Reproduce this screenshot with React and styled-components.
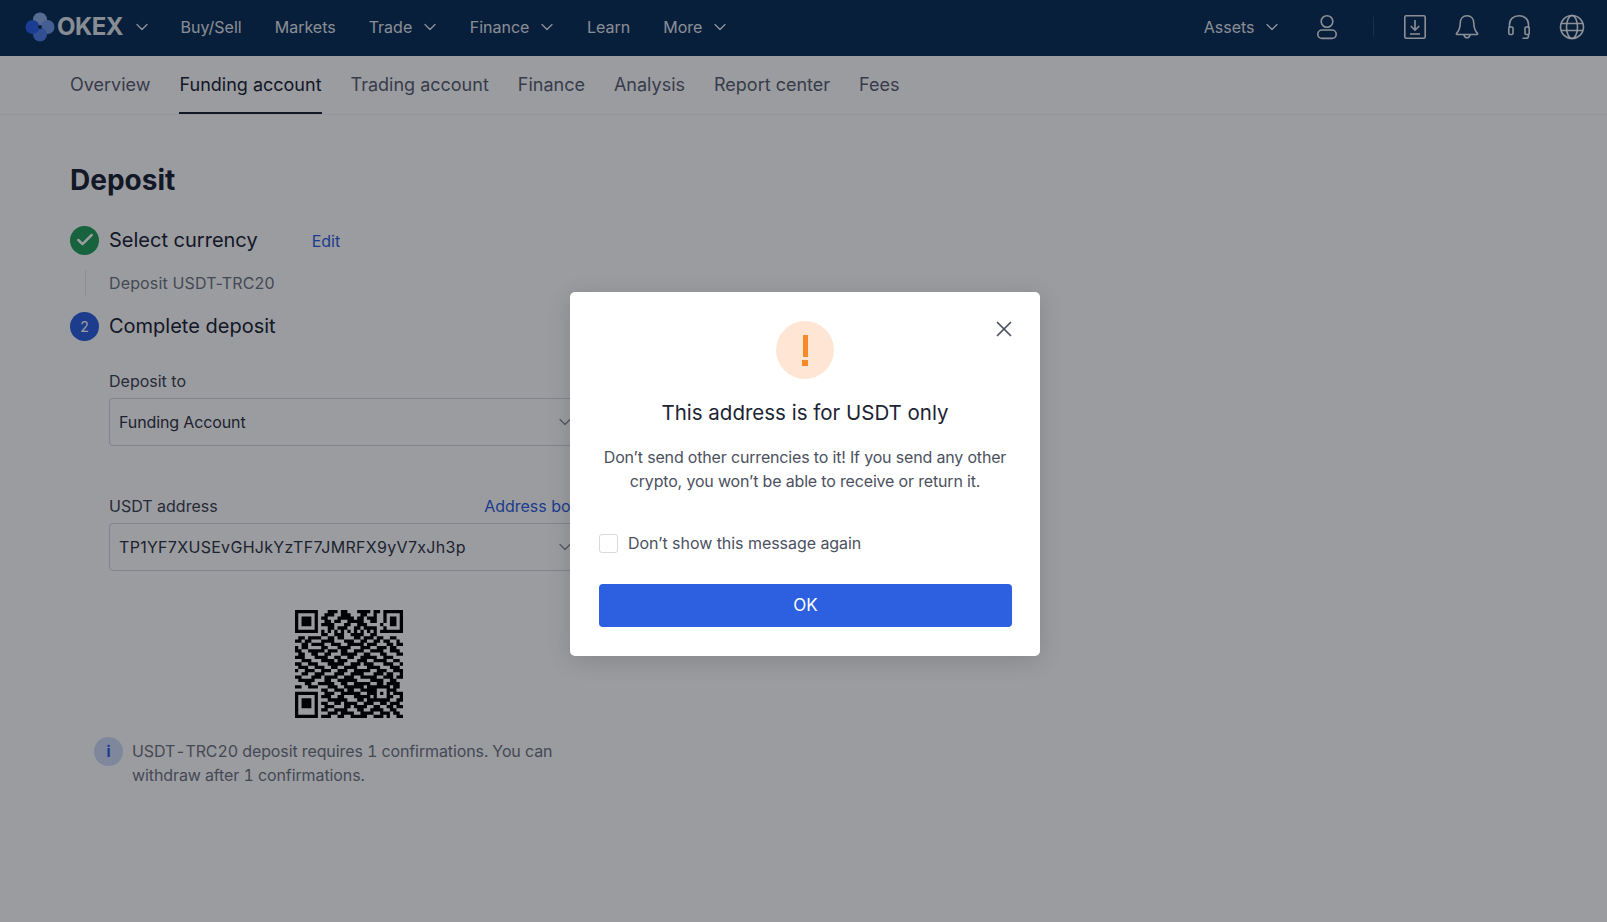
import React from 'react'
import styled, { createGlobalStyle } from 'styled-components'
import { ChevronDown, Check, X } from 'lucide-react'

const GlobalStyle = createGlobalStyle`
  html, body {
    margin: 0;
    padding: 0;
    background: #fff;
    font-family: Inter, "Noto Sans", sans-serif;
    color: #1c2433;
  }
  * { box-sizing: border-box; }
`

const QR_ROWS = [
  '111111100011101100011110110111111',
  '100000100111001110001100100100001',
  '101110101100011111011011100101101',
  '101110100110110011111001100101101',
  '101110101111000110011100001001101',
  '100000100011011100110111100100001',
  '111111101010101010101010101111111',
  '000000001100111001111001100000000',
  '011011110011011000110111011001100',
  '110110001111000111001100110110010',
  '001101111001110011111011100011011',
  '101100001100011110001110011101100',
  '110011111011101100111001111001110',
  '011001100110001111100110001100011',
  '111000111100110011001111100111000',
  '001110001111011100011100111100110',
  '110011100011111001110111000111001',
  '011100111001100111100011110001110',
  '100111001110011100111110011100111',
  '001100111000111001111000111011001',
  '110001110111100111001111100111011',
  '011111000110011111100001111001100',
  '000110011111001100111110011011110',
  '110011100011100111111011111110110',
  '000000001100111011001111100011100',
  '111111100111001111110011101010111',
  '100000101110011000111110100011001',
  '101110100011111100011011111110011',
  '101110101100110111100111001101110',
  '101110100111000110111100110011011',
  '100000101100111100011001111001100',
  '100000100011101111001111001110110',
  '111111101110011001111100111010011',
]

const qrPath = QR_ROWS.map((row, y) =>
  row.split('').map((cell, x) => (cell === '1' ? `M${x} ${y}h1v1h-1z` : '')).join('')
).join('')

const navLinks = [
  { label: 'Buy/Sell' },
  { label: 'Markets' },
  { label: 'Trade', menu: true },
  { label: 'Finance', menu: true },
  { label: 'Learn' },
  { label: 'More', menu: true },
]

const tabs = ['Overview', 'Funding account', 'Trading account', 'Finance', 'Analysis', 'Report center', 'Fees']

function Logo() {
  return (
    <svg width="30" height="30" viewBox="0 0 30 30">
      <circle cx="15" cy="7.5" r="7" fill="#8db0e6" />
      <circle cx="22.5" cy="15" r="7" fill="#6f9ae6" />
      <circle cx="15" cy="22.5" r="7" fill="#4f7fea" />
      <circle cx="7.5" cy="15" r="7" fill="#2c62ec" />
      <circle cx="15" cy="15" r="2" fill="#0a2f59" />
    </svg>
  )
}

function App() {
  return (
    <Page>
      <GlobalStyle />
      <TopBar>
        <Brand>
          <Logo />
          <Wordmark>OKEX</Wordmark>
          <ChevronDown size={20} strokeWidth={1.6} />
        </Brand>
        <NavList>
          {navLinks.map(link => (
            <NavItem key={link.label}>
              {link.label}
              {link.menu && <ChevronDown size={20} strokeWidth={1.6} />}
            </NavItem>
          ))}
        </NavList>
        <RightNav>
          <NavItem>
            Assets
            <ChevronDown size={20} strokeWidth={1.6} />
          </NavItem>
          <UserIcon viewBox="0 0 24 26" fill="none" stroke="currentColor" strokeWidth="1.6">
            <circle cx="12" cy="7.5" r="5.8" />
            <rect x="2.800" y="16" width="18.400" height="8.400" rx="4.200" />
          </UserIcon>
          <Divider />
          <IconGroup>
            <NavIcon viewBox="0 0 24 26" fill="none" stroke="currentColor" strokeWidth="1.6">
              <rect x="1.8" y="1.8" width="20.4" height="22.4" rx="1.5" />
              <path d="M12 6v10M7.8 12l4.2 4.2 4.2-4.2M7 20h10" />
            </NavIcon>
            <NavIcon viewBox="0 0 24 26" fill="none" stroke="currentColor" strokeWidth="1.6">
              <path d="M12 1.8c-4.4 0-6.8 3.4-6.8 7.4 0 5-1.6 8-3.7 10.2-.4.5 0 1.1.5 1.1h20c.6 0 .9-.6.5-1.1-2.100-2.200-3.700-5.200-3.700-10.200 0-4-2.400-7.400-6.800-7.400z" />
              <path d="M9 21c.5 1.800 1.500 2.800 3 2.800s2.500-1 3-2.800" />
            </NavIcon>
            <NavIcon viewBox="0 0 24 26" fill="none" stroke="currentColor" strokeWidth="1.6">
              <path d="M2.500 14v-3.500C2.500 5.200 6.600 1.800 12 1.800s9.500 3.400 9.500 8.700V14" />
              <rect x="1.800" y="13" width="4.200" height="7.500" rx="1.200" />
              <rect x="18" y="13" width="4.200" height="7.500" rx="1.200" />
              <path d="M21.500 20.500v1.500c0 1.500-1 2.300-2.500 2.300h-3.500" />
            </NavIcon>
            <NavIcon viewBox="0 0 26 26" fill="none" stroke="currentColor" strokeWidth="1.6">
              <circle cx="13" cy="13" r="11.500" />
              <ellipse cx="13" cy="13" rx="5.500" ry="11.500" />
              <path d="M2 9.500h22M2 16.500h22" />
            </NavIcon>
          </IconGroup>
        </RightNav>
      </TopBar>

      <TabBar>
        {tabs.map(tab => (
          <Tab key={tab} $active={tab === 'Funding account'}>{tab}</Tab>
        ))}
      </TabBar>

      <Main>
        <Heading>Deposit</Heading>
        <StepRow>
          <StepBadge $done><Check size={20} strokeWidth={3} /></StepBadge>
          <StepTitle>Select currency</StepTitle>
          <EditLink>Edit</EditLink>
        </StepRow>
        <StepSummary>Deposit USDT-TRC20</StepSummary>
        <StepRow>
          <StepBadge>2</StepBadge>
          <StepTitle>Complete deposit</StepTitle>
        </StepRow>
        <Form>
          <Field $space={48}>
            <FieldHead>
              <span>Deposit to</span>
            </FieldHead>
            <SelectBox>
              <SelectValue $tracking={-0.12}>Funding Account</SelectValue>
              <ChevronDown size={20} strokeWidth={1.6} />
            </SelectBox>
          </Field>
          <Field $space={39}>
            <FieldHead>
              <span>USDT address</span>
              <BlueLink>Address book</BlueLink>
            </FieldHead>
            <SelectBox>
              <SelectValue $tracking={0.3}>TP1YF7XUSEvGHJkYzTF7JMRFX9yV7xJh3p</SelectValue>
              <ChevronDown size={20} strokeWidth={1.6} />
            </SelectBox>
          </Field>
          <QrCode viewBox="0 0 33 33">
            <path d={qrPath} fill="#000" />
          </QrCode>
        </Form>
        <Notice>
          <NoticeIcon>i</NoticeIcon>
          <NoticeText>USDT-TRC20 deposit requires 1 confirmations. You can withdraw after 1 confirmations.</NoticeText>
        </Notice>
      </Main>

      <Overlay />
      <Modal>
        <CloseButton><X size={26} strokeWidth={1.6} /></CloseButton>
        <WarnCircle>
          <WarnBar />
          <WarnDot />
        </WarnCircle>
        <ModalTitle>This address is for USDT only</ModalTitle>
        <ModalText>Don’t send other currencies to it! If you send any other crypto, you won’t be able to receive or return it.</ModalText>
        <CheckRow>
          <CheckBox />
          Don’t show this message again
        </CheckRow>
        <OkButton>OK</OkButton>
      </Modal>
    </Page>
  )
}

const Page = styled.div`
  position: relative;
  min-height: 922px;
  overflow: hidden;
`

const TopBar = styled.header`
  display: flex;
  align-items: center;
  height: 56px;
  padding: 0 22px 3px 25px;
  background: #0a2f59;
  color: rgba(255, 255, 255, 0.9);
`

const Brand = styled.div`
  display: flex;
  align-items: center;
  svg:last-child {
    margin: 0 -4px 0 9px;
  }
`

const Wordmark = styled.span`
  margin-left: 2px;
  font-size: 24px;
  font-weight: 700;
  letter-spacing: -0.5px;
`

const NavList = styled.nav`
  display: flex;
  align-items: center;
  gap: 33px;
  margin-left: 32.500px;
`

const NavItem = styled.div`
  display: flex;
  align-items: center;
  font-size: 16px;
  line-height: 24px;
  svg {
    margin: 0 -3px 0 7.500px;
  }
`

const RightNav = styled.div`
  display: flex;
  align-items: center;
  margin-left: auto;
`

const UserIcon = styled.svg`
  width: 24px;
  height: 26px;
  margin-left: 36px;
`

const Divider = styled.div`
  width: 1px;
  height: 20px;
  margin: 0 29px 0 34px;
  background: rgba(255, 255, 255, 0.12);
`

const IconGroup = styled.div`
  display: flex;
  align-items: center;
  gap: 28px;
`

const NavIcon = styled.svg`
  width: auto;
  height: 26px;
`

const TabBar = styled.div`
  display: flex;
  gap: 29px;
  height: 59px;
  padding-left: 70px;
  border-bottom: 1px solid #f2f3f5;
`

const Tab = styled.div`
  display: flex;
  align-items: center;
  height: 58px;
  font-size: 18px;
  color: ${p => (p.$active ? '#1c2433' : '#5b6070')};
  border-bottom: 2px solid ${p => (p.$active ? '#1c2433' : 'transparent')};
`

const Main = styled.main`
  padding: 47px 0 0 70px;
`

const Heading = styled.h1`
  margin: 0 0 28px;
  font-size: 28px;
  line-height: 36px;
  font-weight: 700;
  color: #1c2433;
`

const StepRow = styled.div`
  display: flex;
  align-items: center;
  height: 28px;
`

const StepBadge = styled.div`
  display: flex;
  align-items: center;
  justify-content: center;
  width: 29px;
  height: 29px;
  margin-right: 10px;
  border-radius: 50%;
  font-size: 14px;
  color: #fff;
  background: ${p => (p.$done ? '#23a05a' : '#2d60e0')};
`

const StepTitle = styled.div`
  font-size: 20px;
  line-height: 28px;
  color: #1c2433;
`

const EditLink = styled.a`
  margin: 2px 0 0 54px;
  font-size: 16px;
  color: #2d60e0;
`

const StepSummary = styled.div`
  margin: 16px 0 15px 15px;
  padding-left: 23px;
  border-left: 1px solid #e6e8eb;
  font-size: 16px;
  line-height: 27px;
  letter-spacing: 0.15px;
  color: #70757f;
`

const Form = styled.div`
  display: flex;
  flex-direction: column;
  width: 480px;
  margin: 29px 0 0 39px;
`

const Field = styled.div`
  margin-bottom: ${p => p.$space}px;
`

const FieldHead = styled.div`
  display: flex;
  justify-content: space-between;
  margin-bottom: 5px;
  font-size: 16px;
  line-height: 24px;
  color: #3d4352;
`

const BlueLink = styled.a`
  color: #2d60e0;
`

const SelectBox = styled.div`
  display: flex;
  align-items: center;
  justify-content: space-between;
  height: 48px;
  padding: 0 13px 0 9px;
  border: 1px solid #d5d7de;
  border-radius: 4px;
  font-size: 16px;
  color: #2f3544;
  svg {
    color: #8b8f99;
  }
`

const SelectValue = styled.span`
  letter-spacing: ${p => p.$tracking}px;
`

const QrCode = styled.svg`
  display: block;
  width: 108px;
  height: 108px;
  align-self: center;
`

const Notice = styled.div`
  display: flex;
  gap: 9px;
  width: 470px;
  margin: 19px 0 0 24px;
`

const NoticeIcon = styled.div`
  flex: none;
  display: flex;
  align-items: center;
  justify-content: center;
  width: 29px;
  height: 29px;
  border-radius: 50%;
  background: #cfdcf7;
  color: #2d60e0;
  font-size: 15px;
  font-weight: 700;
`

const NoticeText = styled.div`
  width: 430px;
  padding-top: 2px;
  font-size: 16px;
  line-height: 24px;
  letter-spacing: -0.1px;
  font-variant-numeric: tabular-nums;
  color: #70757f;
`

const Overlay = styled.div`
  position: absolute;
  inset: 0;
  background: rgba(5, 7, 17, 0.4);
`

const Modal = styled.div`
  position: absolute;
  top: 292px;
  left: 570px;
  display: flex;
  flex-direction: column;
  align-items: center;
  width: 470px;
  height: 364px;
  padding: 29px;
  border-radius: 5px;
  background: #fff;
  box-shadow: 0 4px 24px rgba(0, 0, 0, 0.14);
`

const CloseButton = styled.div`
  position: absolute;
  top: 24px;
  right: 23px;
  display: flex;
  color: #4b5160;
`

const WarnCircle = styled.div`
  display: flex;
  flex-direction: column;
  align-items: center;
  justify-content: center;
  gap: 3px;
  flex: none;
  width: 58px;
  height: 58px;
  border-radius: 50%;
  background: #ffe6d4;
`

const WarnBar = styled.div`
  width: 5px;
  height: 22px;
  background: #f58a2a;
`

const WarnDot = styled.div`
  width: 6px;
  height: 6px;
  background: #f58a2a;
`

const ModalTitle = styled.div`
  margin-top: 19px;
  font-size: 20.5px;
  line-height: 30px;
  color: #1c2433;
`

const ModalText = styled.p`
  margin: 17px 0 0;
  font-size: 16px;
  line-height: 24px;
  letter-spacing: -0.17px;
  text-align: center;
  color: #4b5160;
`

const CheckRow = styled.label`
  display: flex;
  align-items: center;
  gap: 10px;
  align-self: flex-start;
  margin-top: 38px;
  font-size: 16px;
  line-height: 24px;
  letter-spacing: -0.05px;
  color: #4b5160;
`

const CheckBox = styled.span`
  width: 19px;
  height: 19px;
  border: 1px solid #d8dae2;
  border-radius: 3px;
`

const OkButton = styled.button`
  flex: none;
  align-self: flex-start;
  width: calc(100% + 1px);
  height: 43px;
  margin-top: 29px;
  padding: 0 0 2px;
  border: 0;
  border-radius: 4px;
  background: #2d60e0;
  color: #fff;
  font: inherit;
  font-size: 17px;
`

export default App
